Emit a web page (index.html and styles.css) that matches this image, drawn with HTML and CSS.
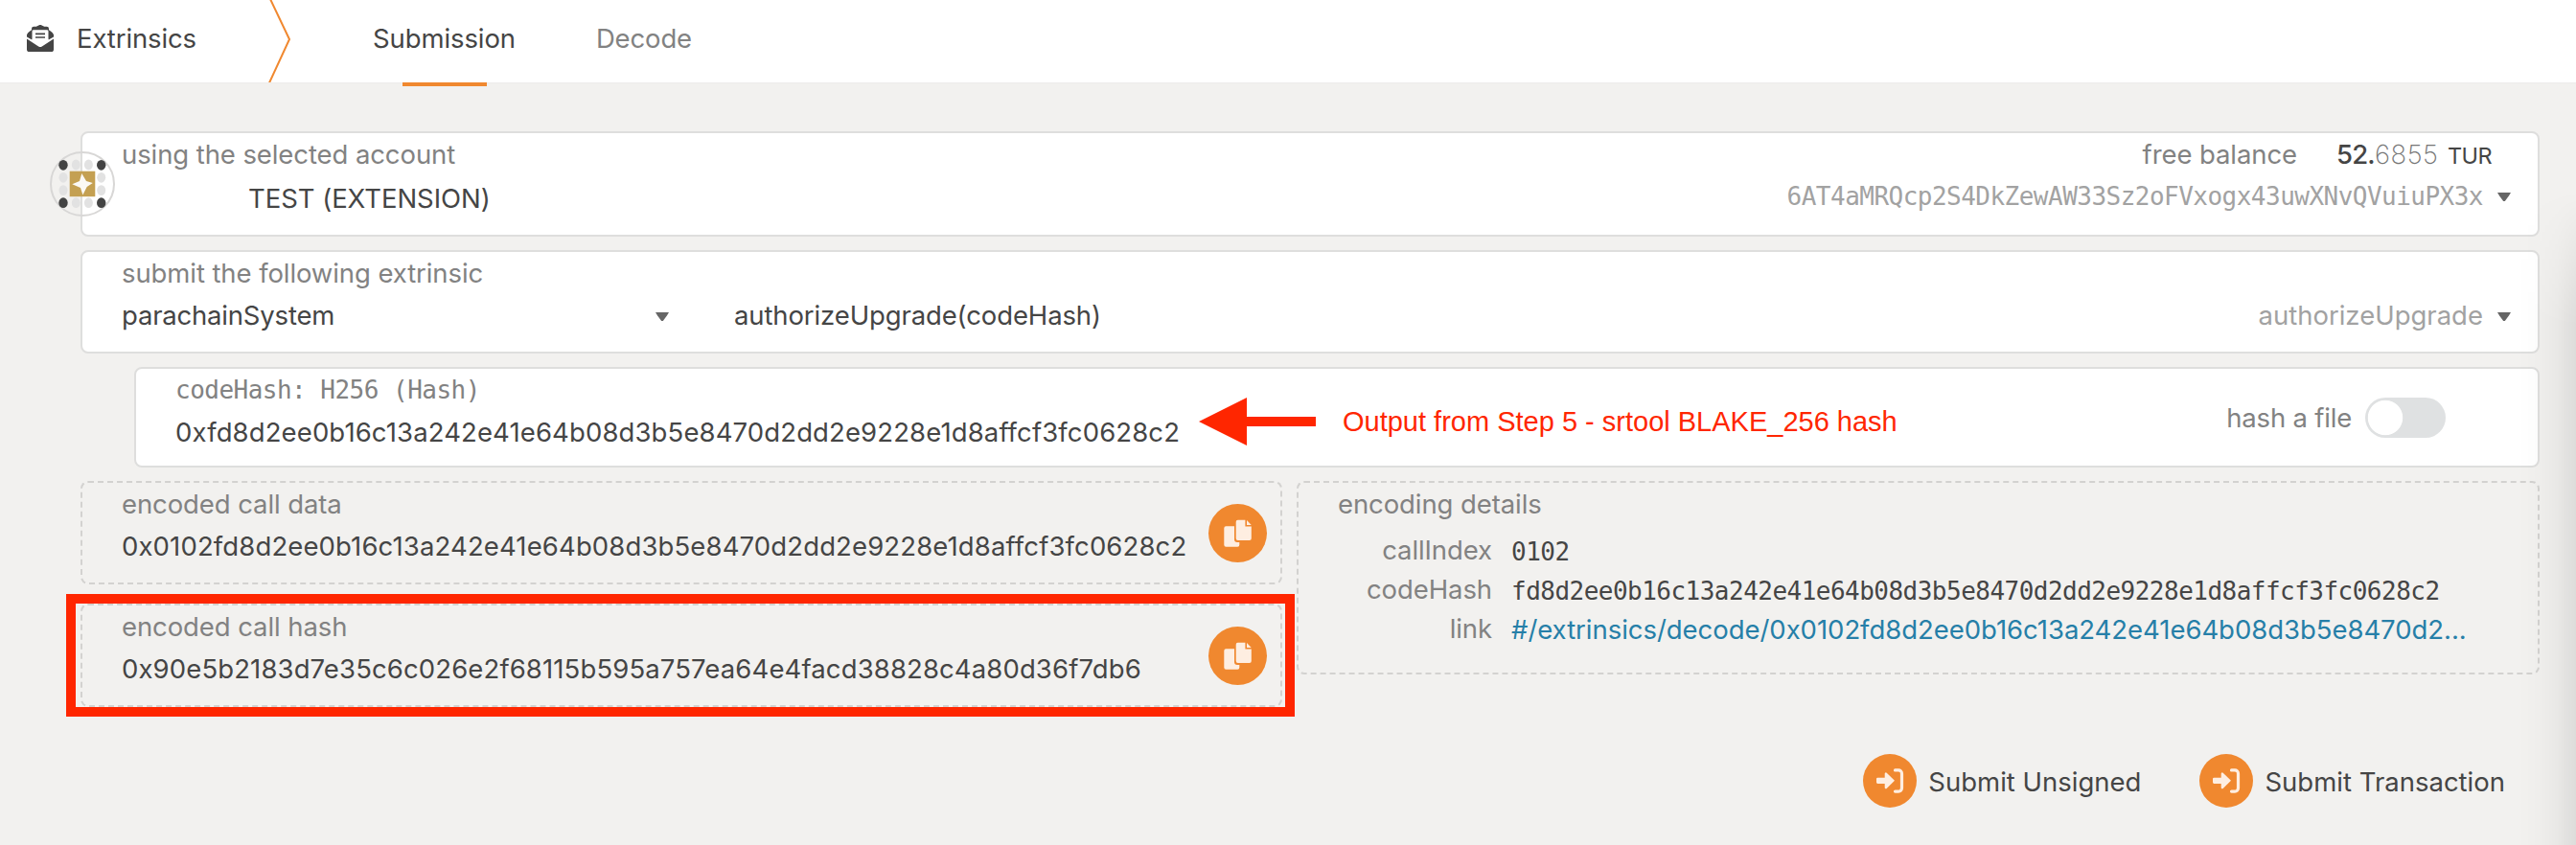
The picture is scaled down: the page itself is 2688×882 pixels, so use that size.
FILE: index.html
```html
<!DOCTYPE html>
<html lang="en">
<head>
<meta charset="utf-8">
<title>Extrinsics</title>
<link rel="stylesheet" href="styles.css">
</head>
<body>
<svg class="defs" aria-hidden="true">
  <symbol id="copy" viewBox="0 0 61 61">
    <path d="M18.3 23.3H27V37a3 3 0 0 0 3 3h2.3v2.7a2 2 0 0 1-2 2h-12a2 2 0 0 1-2-2V25.3a2 2 0 0 1 2-2z"/>
    <path d="M30.7 16.7H38.4V23.6H44.8V36a2 2 0 0 1-2 2H30.7a2 2 0 0 1-2-2V18.700a2 2 0 0 1 2-2z"/>
    <path d="M40 16.900L44.700 21.900H40z"/>
  </symbol>
  <symbol id="sign-in" viewBox="0 0 56 56">
    <path d="M15.400 24.700H22.700V20.700a1.200 1.200 0 0 1 2-1L33 27.800 24.700 36a1.200 1.200 0 0 1-2-1V31H15.400a1.400 1.400 0 0 1-1.400-1.400V26.100a1.400 1.400 0 0 1 1.400-1.400z"/>
    <path class="stroke" d="M33.500 16.900H37a3.500 3.500 0 0 1 3.500 3.500V35.600a3.500 3.500 0 0 1-3.500 3.500H33.500"/>
  </symbol>
</svg>

<header class="topbar">
  <div class="brand">
    <svg class="brand-icon" viewBox="0 0 28 28">
      <path d="M2.600 7L5 5.200V4A2.200 2.200 0 0 1 7.200 1.800H9.800L12.300.5a3 3 0 0 1 3.400 0L18.200 1.800H20.800A2.200 2.200 0 0 1 23 4V5.200L25.400 7A6 6 0 0 1 28 10.500V25.400A2.600 2.600 0 0 1 25.400 28H2.600A2.600 2.600 0 0 1 0 25.400V10.500A6 6 0 0 1 2.600 7z"/>
      <path class="paper" d="M5.300 6.700A1.500 1.500 0 0 1 6.800 5.200H21.200A1.500 1.500 0 0 1 22.700 6.700V14.800L28 11.500V14.500L15.800 22.400Q14 23.500 12.200 22.400L0 14.500V11.500L5.300 14.800z"/>
      <path d="M0 10.500L5.300 6V15.500L0 12.600zM28 10.500L22.700 6V15.500L28 12.600z"/>
      <path d="M9 8.600H19V10.200H9zM9 12.200H19V13.800H9z"/>
    </svg>
    <span>Extrinsics</span>
  </div>
  <svg class="chevron" viewBox="0 0 24 86"><path d="M2 -1L22 41L1 86.500"/></svg>
  <nav class="tabs">
    <span class="tab active">Submission</span>
    <span class="tab">Decode</span>
  </nav>
</header>

<main class="content">
  <section class="panel account">
    <svg class="identicon" viewBox="0 0 68 68">
      <circle class="ring" cx="34" cy="34" r="33"/>
      <g class="pale">
        <ellipse cx="27.300" cy="14" rx="4.500" ry="5.400"/><ellipse cx="40.400" cy="14" rx="4.500" ry="5.400"/>
        <ellipse cx="14" cy="27.300" rx="4.500" ry="5.400"/><ellipse cx="53.700" cy="27.300" rx="4.500" ry="5.400"/>
        <ellipse cx="14" cy="40.600" rx="4.500" ry="5.400"/><ellipse cx="53.700" cy="40.600" rx="4.500" ry="5.400"/>
        <ellipse cx="27.300" cy="53.700" rx="4.500" ry="5.400"/><ellipse cx="40.400" cy="53.700" rx="4.500" ry="5.400"/>
      </g>
      <g class="dark">
        <ellipse cx="14" cy="14.300" rx="4.700" ry="5.400"/><ellipse cx="53.700" cy="14.300" rx="4.700" ry="5.400"/>
        <ellipse cx="14" cy="53.700" rx="4.700" ry="5.400"/><ellipse cx="53.700" cy="53.700" rx="4.700" ry="5.400"/>
      </g>
      <path class="gold" d="M20.700 20.700H47.300V47.200H20.700z"/>
      <path class="star" d="M33.300 23L38 31L44.800 33L38.700 37L34.400 45.500L32 38L23.300 34.300L31 31z"/>
    </svg>
    <div class="line">
      <span class="label">using the selected account</span>
      <span class="balance"><span class="label">free balance</span><span class="amount"><b>52.</b><i>6855</i><small>TUR</small></span></span>
    </div>
    <div class="line address-line">
      <span class="name">TEST (EXTENSION)</span>
      <span class="picker"><span class="mono address">6AT4aMRQcp2S4DkZewAW33Sz2oFVxogx43uwXNvQVuiuPX3x</span><span class="caret"></span></span>
    </div>
  </section>

  <section class="panel extrinsic">
    <div class="line"><span class="label">submit the following extrinsic</span></div>
    <div class="line choice">
      <span class="module"><span class="module-name">parachainSystem</span><span class="caret"></span></span>
      <span class="method">authorizeUpgrade(codeHash)</span>
      <span class="picker"><span class="faded">authorizeUpgrade</span><span class="caret"></span></span>
    </div>
  </section>

  <section class="panel param">
    <div class="param-text">
      <div class="mono label">codeHash: H256 (Hash)</div>
      <div class="hex">0xfd8d2ee0b16c13a242e41e64b08d3b5e8470d2dd2e9228e1d8affcf3fc0628c2</div>
    </div>
    <svg class="arrow" viewBox="0 0 122 50"><path d="M0 25L50 0V20H122V30H50V50z"/></svg>
    <span class="note">Output from Step 5 - srtool BLAKE_256 hash</span>
    <span class="label toggle-label">hash a file</span>
    <span class="toggle"></span>
  </section>

  <div class="outputs">
    <div class="encoded">
      <section class="dashed call">
        <div><div class="label">encoded call data</div><div class="hex wide">0x0102fd8d2ee0b16c13a242e41e64b08d3b5e8470d2dd2e9228e1d8affcf3fc0628c2</div></div>
        <svg class="round copy"><use href="#copy"/></svg>
      </section>
      <section class="dashed call marked">
        <div><div class="label">encoded call hash</div><div class="hex">0x90e5b2183d7e35c6c026e2f68115b595a757ea64e4facd38828c4a80d36f7db6</div></div>
        <svg class="round copy"><use href="#copy"/></svg>
      </section>
    </div>
    <section class="dashed details">
      <div class="label">encoding details</div>
      <div class="grid">
        <span class="label">callIndex</span><span class="mono">0102</span>
        <span class="label">codeHash</span><span class="mono">fd8d2ee0b16c13a242e41e64b08d3b5e8470d2dd2e9228e1d8affcf3fc0628c2</span>
        <span class="label">link</span><a class="link">#/extrinsics/decode/0x0102fd8d2ee0b16c13a242e41e64b08d3b5e8470d2...</a>
      </div>
    </section>
  </div>

  <div class="actions">
    <span class="action unsigned"><svg class="round"><use href="#sign-in"/></svg>Submit Unsigned</span>
    <span class="action"><svg class="round"><use href="#sign-in"/></svg>Submit Transaction</span>
  </div>
</main>
<div class="edge-shadow"></div>
</body>
</html>
```
FILE: styles.css
```css
*, *::before, *::after { box-sizing: border-box; }
body {
  position: relative;
  width: 2688px;
  height: 882px;
  margin: 0;
  overflow: hidden;
  background: #f2f1ef;
  color: #454545;
  font: 27.5px/40px Inter, "Liberation Sans", sans-serif;
  letter-spacing: -0.09px;
  white-space: nowrap;
}
svg { display: block; flex: none; }
.defs { position: absolute; width: 0; height: 0; }

.topbar { display: flex; height: 86px; background: #fff; box-shadow: 0 1px 1px #eeedec; }
.brand { display: flex; width: 280px; padding: 20px 0 0 28px; gap: 24px; letter-spacing: -0.12px; }
.brand-icon { width: 28px; height: 28px; margin-top: 6px; fill: #454545; }
.brand-icon .paper { fill: #fff; }
.chevron { width: 24px; height: 86px; fill: none; stroke: #f0882f; stroke-width: 2; }
.tabs { display: flex; gap: 84px; margin-left: 85px; padding-top: 20px; }
.tab { height: 66px; color: #828282; letter-spacing: -0.15px; }
.tab.active { position: relative; color: #454545; letter-spacing: -0.1px; }
.tab.active::after { content: ""; position: absolute; left: 31px; top: 66px; width: 88px; height: 4px; background: #f0882f; }

.content { padding: 51px 38px 0 84px; }
.panel { position: relative; border: 2px solid #dededd; border-radius: 8px; background: #fff; }
.line { display: flex; justify-content: space-between; height: 40px; }
.label { color: #828282; }
.mono { font: 26px/40px "DejaVu Sans Mono", monospace; letter-spacing: -0.52px; }
.caret { width: 14px; height: 9px; background: #666; clip-path: polygon(0 0, 100% 0, 86% 35%, 56% 100%, 44% 100%, 14% 35%); }

.account { height: 110px; padding: 2px 28px 0 41px; }
.identicon { position: absolute; left: -34px; top: 19px; width: 68px; height: 68px; }
.ring { fill: none; stroke: #d8d7d6; stroke-width: 2; }
.pale { fill: #e2e2e2; }
.dark { fill: #434343; }
.gold { fill: #c4a052; }
.star { fill: #fbf9f5; }
.balance { display: flex; margin-right: 18px; }
.amount { display: flex; width: 164px; margin-left: 41px; }
.amount b { font-weight: 500; width: 40px; letter-spacing: -0.8px; }
.amount i { font-style: normal; font-weight: 200; width: 76px; letter-spacing: 0.5px; color: #777; }
.amount small { font-size: 23.5px; line-height: 43px; letter-spacing: -0.6px; }
.address-line { margin-top: 6px; }
.name { margin-left: 132px; letter-spacing: -0.05px; }
.picker { display: flex; }
.picker .caret { margin: 14px 0 0 15px; }
.address { margin-top: -2px; color: #a2a2a2; }
.faded { color: #a2a2a2; letter-spacing: 0; }

.extrinsic { height: 108px; margin-top: 14px; padding: 2px 28px 0 41px; }
.choice { justify-content: flex-start; margin-top: 4px; }
.module { display: flex; justify-content: space-between; width: 571px; letter-spacing: -0.2px; }
.module .caret { margin: 17px 0 0 0; }
.method { margin: 0 auto 0 68px; letter-spacing: -0.12px; }
.extrinsic .picker .caret { margin-top: 17px; }

.param { display: flex; height: 105px; margin: 14px 0 0 56px; padding: 2px 96px 0 41px; }
.param-text { width: 1048px; margin-right: 20px; }
.hex { margin-top: 4px; letter-spacing: 0.12px; }
.arrow { width: 122px; height: 50px; margin-top: 28px; fill: #ff2600; }
.note { margin: 33px 0 0 28px; color: #ff2600; font: 29px/40px "Liberation Sans", Arial, sans-serif; letter-spacing: 0; }
.toggle-label { margin: 29px 14px 0 auto; letter-spacing: -0.2px; }
.toggle { width: 84px; height: 42px; margin-top: 28px; border-radius: 21px; background: radial-gradient(circle at 21px 21px, #fff 17.800px, #dfe1e2 18.600px); }

.outputs { display: flex; gap: 15px; margin-top: 14px; align-items: flex-start; }
.encoded { display: grid; gap: 20px; width: 1254px; }
.dashed { border: 2px dashed #d3d2d0; border-radius: 8px; }
.call { position: relative; display: flex; justify-content: space-between; height: 108px; padding: 2px 14px 0 41px; }
.wide { letter-spacing: 0.13px; }
.round { width: 56px; height: 56px; border-radius: 50%; background: #f0882f; fill: #feeee1; }
.round .stroke, .stroke { fill: none; stroke: #feeee1; stroke-width: 3.200; stroke-linecap: round; }
.copy { width: 61px; height: 61px; margin-top: 20px; }
.marked::after { content: ""; position: absolute; left: -17px; top: -12px; width: 1282px; height: 128px; border: 10px solid #ff2600; }
.details { flex: 1; height: 202px; padding: 2px 41px 0; }
.grid { display: grid; grid-template-columns: 161px 1fr; grid-auto-rows: 41px; column-gap: 20px; margin-top: 8px; }
.grid .label { text-align: right; }
.grid .mono { margin-top: 2px; }
.link { margin-top: 1px; color: #267fa8; letter-spacing: -0.04px; }

.actions { display: flex; justify-content: flex-end; margin-top: 49px; padding-right: 36px; }
.action { display: flex; height: 56px; gap: 12px; line-height: 58px; letter-spacing: 0; }
.unsigned { margin-right: 61px; }

.edge-shadow {
  position: absolute;
  right: 0;
  top: 200px;
  width: 60px;
  height: 682px;
  background: linear-gradient(to left, rgba(0, 0, 0, 0.085), rgba(0, 0, 0, 0.035) 20px, rgba(0, 0, 0, 0.01) 40px, transparent);
  mask-image: linear-gradient(to bottom, transparent, #000 140px);
}
```
